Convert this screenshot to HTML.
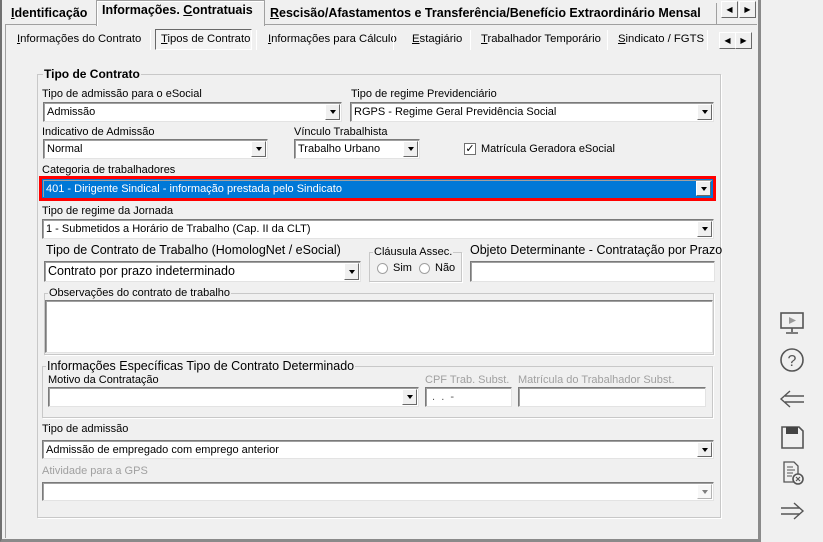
<!DOCTYPE html>
<html><head><meta charset="utf-8"><style>
*{box-sizing:border-box;margin:0;padding:0}
body{width:823px;height:542px;background:#f0f0f0;position:relative;overflow:hidden;font-family:"Liberation Sans","DejaVu Sans",sans-serif;font-size:11px;color:#000}
.a{position:absolute;white-space:nowrap}
.lbl{position:absolute;white-space:nowrap;font-size:11px;line-height:13px}
.cb{position:absolute;background:#fff;border:1px solid;border-color:#7a7a7a #e3e3e3 #e3e3e3 #7a7a7a;box-shadow:inset 1px 1px 0 #a0a0a0;font-size:11px;padding:2px 0 0 3px;line-height:14px;white-space:nowrap;overflow:hidden}
.cb .btn{position:absolute;right:1px;top:1px;bottom:1px;width:15px;background:#f0f0f0;border:1px solid;border-color:#fff #696969 #696969 #fff}
.cb .btn:after{content:"";position:absolute;left:4px;top:50%;margin-top:-2px;border-left:3px solid transparent;border-right:3px solid transparent;border-top:4px solid #000}
.grp{position:absolute;border:1px solid #c8c8c8;box-shadow:1px 1px 0 #fff}
.grp>.t{position:absolute;top:-8px;left:6px;background:#f0f0f0;padding:0 1px;line-height:14px;white-space:nowrap}
.tab1{position:absolute;top:5px;font-weight:bold;font-size:12.5px;font-family:"Liberation Sans",sans-serif;letter-spacing:0;white-space:nowrap;overflow:hidden}
.st{position:absolute;top:33px;font-size:11.3px;white-space:nowrap}
.sep{position:absolute;top:30px;width:1px;height:20px;background:#a0a0a0;border-right:1px solid #fff}
.sb{position:absolute;width:17px;height:17px;background:#f0f0f0;border:1px solid;border-color:#fff #696969 #696969 #fff}
.gray{color:#a0a0a0}
u{text-decoration:underline}
</style></head><body>
<div class="a" style="left:0;top:0;width:761px;height:542px;border-left:2px solid #707070;border-right:3px solid #8a8a8a;border-bottom:3px solid #8a8a8a"></div>
<div class="a" style="left:5px;top:24px;width:752px;height:514px;border-left:1px solid #a0a0a0;border-top:1px solid #a0a0a0;background:#f0f0f0"></div>
<div class="a" style="left:762px;top:0;width:61px;height:542px;background:#f0f0f0"></div>

<div class="a" style="left:96px;top:0;width:169px;height:26px;background:#f0f0f0;border:1px solid #a0a0a0;border-bottom:none;box-shadow:inset 1px 1px 0 #fff"></div>
<div class="a" style="left:266px;top:3px;width:451px;height:21px;border-right:1px solid #a0a0a0"></div>
<div class="tab1" style="left:11px;top:6px"><u>I</u>dentificação</div>
<div class="tab1" style="left:102px;top:3px">Informações. <u>C</u>ontratuais</div>
<div class="tab1" style="left:270px;top:6px;width:446px"><u>R</u>escisão/Afastamentos e Transferência/Benefício Extraordinário Mensal</div>
<div class="sb" style="left:721px;top:1px;font-size:8px;line-height:15px;text-align:center">◀</div>
<div class="sb" style="left:739px;top:1px;font-size:8px;line-height:15px;text-align:center">▶</div>

<div class="st" style="left:17px"><u>I</u>nformações do Contrato</div>
<div class="sep" style="left:150px"></div>
<div class="a" style="left:155px;top:29px;width:97px;height:21px;border:1px solid;border-color:#696969 #fff #fff #696969;background:#f4f4f4"></div>
<div class="st" style="left:161px"><u>T</u>ipos de Contrato</div>
<div class="sep" style="left:256px"></div>
<div class="st" style="left:268px"><u>I</u>nformações para Cálculo</div>
<div class="sep" style="left:393px"></div>
<div class="st" style="left:412px"><u>E</u>stagiário</div>
<div class="sep" style="left:470px"></div>
<div class="st" style="left:481px"><u>T</u>rabalhador Temporário</div>
<div class="sep" style="left:607px"></div>
<div class="st" style="left:618px"><u>S</u>indicato / FGTS</div>
<div class="sep" style="left:707px"></div>
<div class="sb" style="left:719px;top:32px;font-size:8px;line-height:15px;text-align:center">◀</div>
<div class="sb" style="left:735px;top:32px;font-size:8px;line-height:15px;text-align:center">▶</div>

<div class="grp" style="left:37px;top:74px;width:684px;height:444px"><div class="t" style="font-weight:bold;font-size:12px;left:5px">Tipo de Contrato</div></div>

<div class="lbl" style="left:42px;top:88px">Tipo de admissão para o eSocial</div>
<div class="cb" style="left:43px;top:102px;width:299px;height:20px">Admissão<div class="btn"></div></div>
<div class="lbl" style="left:351px;top:88px">Tipo de regime Previdenciário</div>
<div class="cb" style="left:350px;top:102px;width:364px;height:20px">RGPS - Regime Geral Previdência Social<div class="btn"></div></div>

<div class="lbl" style="left:42px;top:126px">Indicativo de Admissão</div>
<div class="cb" style="left:43px;top:139px;width:225px;height:20px">Normal<div class="btn"></div></div>
<div class="lbl" style="left:294px;top:126px">Vínculo Trabalhista</div>
<div class="cb" style="left:294px;top:139px;width:126px;height:20px">Trabalho Urbano<div class="btn"></div></div>
<div class="a" style="left:464px;top:143px;width:12px;height:12px;background:#fff;border:1px solid #707070;font-size:11px;line-height:10px;text-align:center">✓</div>
<div class="lbl" style="left:481px;top:143px">Matrícula Geradora eSocial</div>

<div class="lbl" style="left:42px;top:164px">Categoria de trabalhadores</div>
<div class="a" style="left:39px;top:176px;width:677px;height:25px;border:3px solid #f00"></div>
<div class="cb" style="left:42px;top:179px;width:671px;height:19px;background:#0078d7;color:#fff;border-color:#0078d7">401 - Dirigente Sindical - informação prestada pelo Sindicato<div class="btn"></div></div>

<div class="lbl" style="left:42px;top:205px">Tipo de regime da Jornada</div>
<div class="cb" style="left:42px;top:219px;width:672px;height:20px">1 - Submetidos a Horário de Trabalho (Cap. II da CLT)<div class="btn"></div></div>

<div class="lbl" style="left:46px;top:244px;font-size:12.5px">Tipo de Contrato de Trabalho (HomologNet / eSocial)</div>
<div class="cb" style="left:44px;top:261px;width:317px;height:21px;font-size:12.5px">Contrato por prazo indeterminado<div class="btn"></div></div>
<div class="grp" style="left:369px;top:252px;width:93px;height:30px"><div class="t" style="left:3px">Cláusula Assec.</div></div>
<div class="a" style="left:377px;top:263px;width:11px;height:11px;border-radius:50%;background:#fff;border:1px solid #a0a0a0"></div>
<div class="lbl" style="left:393px;top:262px">Sim</div>
<div class="a" style="left:419px;top:263px;width:11px;height:11px;border-radius:50%;background:#fff;border:1px solid #a0a0a0"></div>
<div class="lbl" style="left:435px;top:262px">Não</div>
<div class="lbl" style="left:470px;top:244px;font-size:12.5px">Objeto Determinante - Contratação por Prazo</div>
<div class="cb" style="left:470px;top:261px;width:245px;height:21px"></div>

<div class="grp" style="left:44px;top:293px;width:670px;height:62px"><div class="t" style="left:3px">Observações do contrato de trabalho</div></div>
<div class="cb" style="left:45px;top:300px;width:668px;height:53px"></div>

<div class="grp" style="left:42px;top:366px;width:671px;height:52px"><div class="t" style="left:3px;font-size:12.5px">Informações Específicas Tipo de Contrato Determinado</div></div>
<div class="lbl" style="left:48px;top:374px">Motivo da Contratação</div>
<div class="cb" style="left:48px;top:387px;width:371px;height:20px"><div class="btn"></div></div>
<div class="lbl gray" style="left:425px;top:374px">CPF Trab. Subst.</div>
<div class="cb" style="left:425px;top:387px;width:87px;height:20px;color:#555">&nbsp;. &nbsp;. &nbsp;-</div>
<div class="lbl gray" style="left:518px;top:374px">Matrícula do Trabalhador Subst.</div>
<div class="cb" style="left:518px;top:387px;width:188px;height:20px"></div>

<div class="lbl" style="left:42px;top:423px">Tipo de admissão</div>
<div class="cb" style="left:42px;top:440px;width:672px;height:19px">Admissão de empregado com emprego anterior<div class="btn"></div></div>
<div class="lbl gray" style="left:42px;top:465px">Atividade para a GPS</div>
<div class="cb" style="left:42px;top:482px;width:672px;height:19px"><div class="btn" style="opacity:.5"></div></div>

<svg class="a" style="left:778px;top:310px" width="30" height="220" viewBox="0 0 30 220" fill="none" stroke="#555" stroke-width="1.6">
<rect x="3" y="3" width="22" height="15" fill="none"/><path d="M11 7 L18 10.5 L11 14Z" fill="#999" stroke="none"/><path d="M14 18 V22 M8 23 H20"/>
<circle cx="14" cy="50" r="11"/><text x="14" y="56" font-size="16" text-anchor="middle" fill="#555" stroke="none" font-family="Liberation Sans">?</text>
<path d="M12 81 L3 89 L12 97 M3 89 H4 M7 86 H26 M7 92 H26" stroke-width="1.4"/>
<path d="M4 117 H21 L25 121 V138 H4Z"/><rect x="8" y="117" width="12" height="7" fill="#444" stroke="none"/>
<path d="M6 152 H16 L20 156 V172 H6Z" stroke-width="1.3"/><path d="M9 157 H15 M9 160 H17 M9 163 H15 M9 166 H14" stroke-width="1"/><circle cx="20" cy="169" r="5" fill="#f0f0f0"/><path d="M18 167 L22 171 M22 167 L18 171" stroke-width="1.2"/>
<path d="M16 193 L25 201 L16 209 M3 198 H22 M3 204 H22" stroke-width="1.4"/>
</svg>
</body></html>
